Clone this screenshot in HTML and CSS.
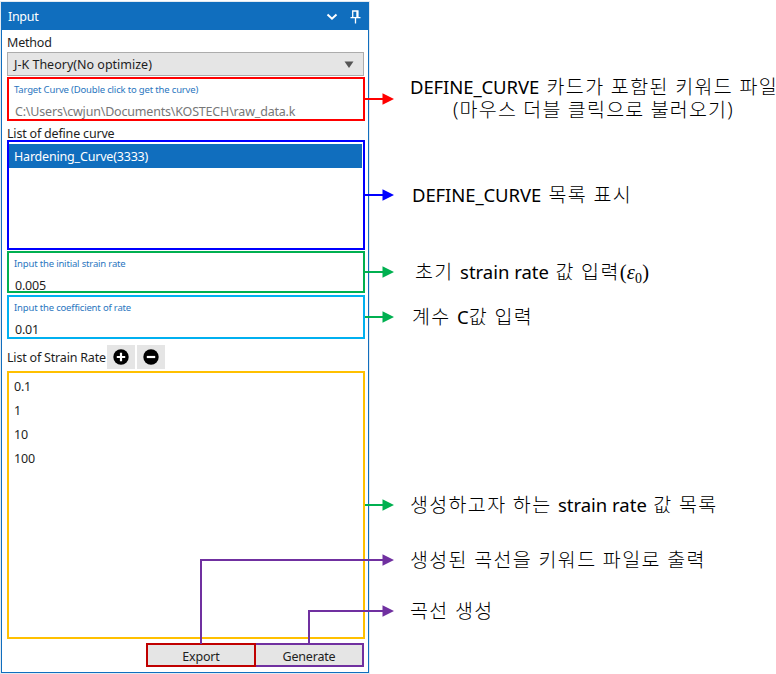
FILE: index.html
```html
<!DOCTYPE html>
<html lang="ko">
<head>
<meta charset="utf-8">
<title>Input</title>
<link rel="stylesheet" href="styles.css">
</head>
<body>
<div class="page">
  <section class="panel">
    <header class="titlebar">
      <span class="title">Input</span>
      <svg class="chevron" width="12" height="8" viewBox="0 0 12 8"><path d="M1.5 1.5 6 5.7l4.5-4.2" fill="none" stroke="#fff" stroke-width="2"/></svg>
      <svg class="pin" width="11" height="14" viewBox="0 0 11 14"><path d="M2.7 7V1h5.2v6M.5 7.6h10M5.5 8v5.5" fill="none" stroke="#fff" stroke-width="1.3"/><path d="M6.3 1h1.8v6H6.3z" fill="#fff"/></svg>
    </header>
    <div class="body">
      <div class="label method">Method</div>
      <div class="combo"><span>J-K Theory(No optimize)</span><svg width="10" height="7" viewBox="0 0 10 7"><path d="M.5.5h9L5 7z" fill="#555"/></svg></div>
      <div class="field red">
        <div class="hint">Target Curve (Double click to get the curve)</div>
        <div class="value path">C:\Users\cwjun\Documents\KOSTECH\raw_data.k</div>
      </div>
      <div class="label define">List of define curve</div>
      <div class="curves"><div class="selected">Hardening_Curve(3333)</div></div>
      <div class="field green">
        <div class="hint">Input the initial strain rate</div>
        <div class="value">0.005</div>
      </div>
      <div class="field cyan">
        <div class="hint">Input the coefficient of rate</div>
        <div class="value">0.01</div>
      </div>
      <div class="ratebar">
        <span>List of Strain Rate</span>
        <button class="tool"><svg width="16" height="16" viewBox="0 0 16 16"><circle cx="8" cy="8" r="7.7"/><path d="M8 3.8v8.4M3.8 8h8.4" stroke="#fff" stroke-width="2.2"/></svg></button>
        <button class="tool"><svg width="16" height="16" viewBox="0 0 16 16"><circle cx="8" cy="8" r="7.7"/><path d="M3.8 8h8.4" stroke="#fff" stroke-width="2.2"/></svg></button>
      </div>
      <div class="rates"><div>0.1</div><div>1</div><div>10</div><div>100</div></div>
      <div class="actions"><button class="export">Export</button><button class="generate">Generate</button></div>
    </div>
  </section>
  <aside class="notes">
    <div class="note n1"><span class="name">DEFINE_CURVE</span> 카드가 포함된 키워드 파일</div>
    <div class="note n2">(마우스 더블 클릭으로 불러오기)</div>
    <div class="note n3"><span class="name">DEFINE_CURVE</span> 목록 표시</div>
    <div class="note n4">초기 <span class="latin">strain rate</span> 값 입력<span class="math">(<i>ε</i><sub>0</sub>)</span></div>
    <div class="note n5">계수 <span class="latin">C</span>값 입력</div>
    <div class="note n6">생성하고자 하는 <span class="latin">strain rate</span> 값 목록</div>
    <div class="note n7">생성된 곡선을 키워드 파일로 출력</div>
    <div class="note n8">곡선 생성</div>
  </aside>
  <svg class="arrows" width="776" height="674" viewBox="0 0 776 674">
    <g fill="none" stroke-width="2">
      <path d="M365 99h19" stroke="#f00"/>
      <path d="M365 195h19" stroke="#00f"/>
      <path d="M365 272h19M365 317h19M365 505h19" stroke="#00b050"/>
      <path d="M201 644V560H384M309 644V611H384" stroke="#7030a0"/>
    </g>
    <path d="M382.5 93.3v11.4l11.5-5.7z" fill="#f00"/>
    <path d="M382.5 189.3v11.4l11.5-5.7z" fill="#00f"/>
    <path d="M382.5 266.3v11.4l11.5-5.7zM382.5 311.3v11.4l11.5-5.7zM382.5 499.3v11.4l11.5-5.7z" fill="#00b050"/>
    <path d="M382.5 554.3v11.4l11.5-5.7zM382.5 605.3v11.4l11.5-5.7z" fill="#7030a0"/>
  </svg>
</div>
</body>
</html>
```
FILE: styles.css
```css
* { box-sizing: border-box; }
body { margin: 0; background: #fff; }
.page {
  position: relative;
  display: flex;
  width: 776px;
  height: 674px;
  overflow: hidden;
  padding: 2px 0 0 1px;
  font: 12.5px/16px "Noto Sans", "Open Sans", sans-serif;
  letter-spacing: -0.19px;
  color: #1e1e1e;
  white-space: nowrap;
}
.panel {
  width: 368px;
  height: 671px;
  border: 1px solid #106ebe;
  box-shadow: 0 0 0 1px #e3eaf1;
  flex: none;
}
.titlebar {
  height: 27px;
  background: #106ebe;
  color: #fff;
  display: flex;
  align-items: center;
  padding: 0 7px 0 6px;
}
.title { flex: 1; padding-top: 1px; letter-spacing: -0.3px; }
.chevron { margin-right: 12px; }
.body { padding: 0 3px 0 5px; display: flex; flex-direction: column; }
.label { height: 16px; }
.method { margin: 5px 0 1px; }
.combo {
  width: 357px;
  height: 24px;
  border: 1px solid #acacac;
  background: #e5e5e5;
  display: flex;
  align-items: center;
  justify-content: space-between;
  padding: 0 9px 0 6px;
}
.combo span { padding-top: 2px; letter-spacing: 0; }
.field { width: 358px; border: 2px solid; padding: 4px 0 0 5px; overflow: hidden; }
.red { height: 44px; border-color: #f00; margin-top: 1px; }
.green { height: 42px; border-color: #00b050; margin-top: 1px; }
.cyan { height: 44px; border-color: #00b0f0; margin-top: 2px; }
.hint { font-size: 9.5px; line-height: 14px; color: #2a76c0; letter-spacing: -0.17px; }
.value { line-height: 16px; margin-top: 7px; color: #1e1e1e; padding-left: 1px; }
.path { color: #777; }
.define { margin: 5px 0 -2px; }
.curves { width: 358px; height: 110px; border: 2px solid #00f; padding-top: 2px; }
.selected { height: 24px; background: #106ebe; color: #fff; padding: 5px 0 0 5px; margin-right: 1px; }
.ratebar { display: flex; align-items: center; height: 24px; margin-top: 6px; }
.ratebar > span { width: 100px; padding-top: 2px; }
.tool { width: 28px; height: 24px; border: 0; background: #e5e5e5; padding: 0; margin-right: 2.4px; display: grid; place-items: center; }
.rates { width: 358px; height: 268px; border: 2px solid #ffc000; margin-top: 2px; padding: 2px 0 0 5px; line-height: 24px; }
.actions { display: flex; margin: 4px 0 0 139px; }
.actions button { height: 24px; background: #e5e5e5; font: inherit; letter-spacing: inherit; color: #1e1e1e; padding: 3px 0 0; }
.export { width: 110px; border: 2px solid #c00000; }
.generate { width: 110px; border: 2px solid #7030a0; margin-left: -2px; position: relative; z-index: -1; }
.notes {
  font: 300 19.5px/22px "Noto Sans", "Noto Sans CJK KR", sans-serif;
  letter-spacing: 1.35px;
  color: #000;
  padding-left: 41px;
}
.name, .latin { font-weight: 400; font-size: 18.5px; line-height: 20px; }
.name { letter-spacing: -0.1px; margin-right: 1px; }
.latin { letter-spacing: 0; }
.note { height: 22px; }
.n1 { margin-top: 74px; }
.n2 { padding-left: 43px; margin-top: 1px; letter-spacing: 1.2px; }
.n3 { margin-top: 63px; padding-left: 2px; }
.n4 { margin-top: 55px; padding-left: 5px; }
.n5 { margin-top: 23px; padding-left: 2px; }
.n6 { margin-top: 166px; }
.n7 { margin-top: 33px; }
.n8 { margin-top: 29px; }
.math { font: 400 20.5px/20px "Liberation Serif", serif; letter-spacing: 0.2px; }
.math sub { font-size: 14px; line-height: 0; vertical-align: -4px; }
.arrows { position: absolute; left: 0; top: 0; pointer-events: none; }
```
